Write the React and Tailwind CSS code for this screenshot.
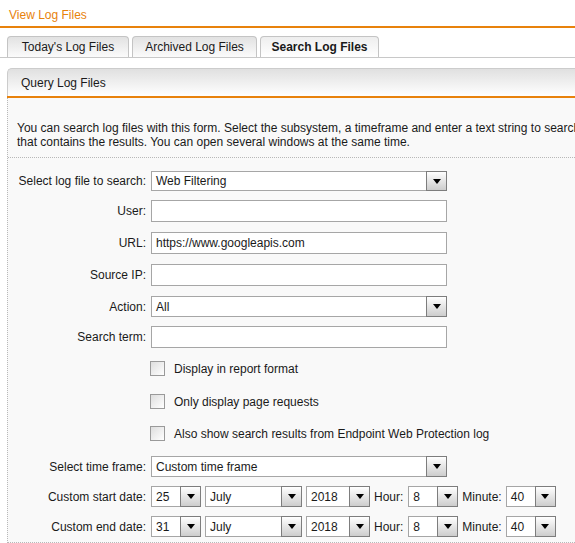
import React from 'react'

const Select = ({ value, className = '' }) => (
  <div className={`flex h-full items-stretch border border-[#a6a6a6] bg-white ${className}`}>
    <div className="flex flex-1 items-center overflow-hidden whitespace-nowrap pl-[4px]">{value}</div>
    <div className="-my-px -mr-px flex w-[21px] items-center justify-center border border-[#7d7d7d] bg-gradient-to-b from-white to-[#cdcdcd]">
      <div className="h-0 w-0 border-x-[4px] border-t-[5px] border-x-transparent border-t-black" />
    </div>
  </div>
)

const Input = ({ value = '' }) => (
  <div className="flex h-full w-[296px] items-center border border-[#a6a6a6] bg-white pl-[4px]">{value}</div>
)

const Row = ({ label, children, className = '' }) => (
  <div className={`flex items-stretch ${className}`}>
    <div className="flex w-[138px] items-center justify-end whitespace-nowrap">{label}</div>
    <div className="ml-[5px] flex items-stretch">{children}</div>
  </div>
)

const Check = ({ label, className = '' }) => (
  <div className={`flex h-[15px] items-center pl-[142px] ${className}`}>
    <div className="h-[15px] w-[15px] border border-[#9a9a9a] bg-gradient-to-br from-[#dedede] to-white" />
    <span className="ml-[9px] whitespace-nowrap">{label}</span>
  </div>
)

const Tab = ({ label, active }) => (
  <div
    className={`flex h-[21px] items-center justify-center rounded-t-[4px] border border-b-0 border-[#c4c4c4] ${
      active ? 'bg-gradient-to-b from-[#eeeeee] to-white font-bold' : 'bg-gradient-to-b from-[#e2e2e2] to-[#fbfbfb]'
    }`}
  >
    {label}
  </div>
)

const DateRow = ({ label, day, className }) => (
  <Row label={label} className={`h-[21px] ${className}`}>
    <Select value={day} className="w-[50px]" />
    <Select value="July" className="ml-[4px] w-[97px]" />
    <Select value="2018" className="ml-[4px] w-[64px]" />
    <span className="ml-[4px] flex items-center">Hour:</span>
    <Select value="8" className="ml-[5px] w-[50px]" />
    <span className="ml-[4px] flex items-center">Minute:</span>
    <Select value="40" className="ml-[4px] w-[50px]" />
  </Row>
)

export default function App() {
  return (
    <div className="h-[543px] w-[575px] overflow-hidden bg-white font-['Liberation_Sans',Arial,sans-serif] text-[12px] leading-[14px] text-[#1a1a1a]">
      <div className="h-[26px] pl-[9px] pt-[8px] text-[#e8820c]">View Log Files</div>
      <div className="h-[2px] bg-[#e8820c]" />

      <div className="mt-[8px] flex border-b border-[#c8c8c8] pl-[7px]">
        <div className="w-[122px]"><Tab label="Today's Log Files" /></div>
        <div className="ml-[3px] w-[125px]"><Tab label="Archived Log Files" /></div>
        <div className="ml-[3px] w-[119px]"><Tab label="Search Log Files" active /></div>
      </div>

      <div className="ml-[7px] mt-[10px] w-[760px]">
        <div className="flex h-[28px] items-center rounded-tl-[5px] border-l border-t border-[#cccccc] bg-gradient-to-b from-[#e0e0e0] to-white pl-[13px]">
          Query Log Files
        </div>
        <div className="h-[2px] bg-[#e8820c]" />
        <div className="border-l border-dotted border-[#b8b8b8] bg-[#f9f9f9] pb-[10px]">
          <p className="whitespace-nowrap pl-[9px] pt-[23px]">
            You can search log files with this form. Select the subsystem, a timeframe and enter a text string to search for. A new window opens
            <br />
            that contains the results. You can open several windows at the same time.
          </p>
          <div className="mt-[8px] border-t border-dotted border-[#b8b8b8]" />

          <Row label="Select log file to search:" className="mt-[13px] h-[20px]">
            <Select value="Web Filtering" className="w-[296px]" />
          </Row>
          <Row label="User:" className="mt-[9px] h-[22px]">
            <Input />
          </Row>
          <Row label="URL:" className="mt-[10px] h-[22px]">
            <Input value="https://www.googleapis.com" />
          </Row>
          <Row label="Source IP:" className="mt-[10px] h-[22px]">
            <Input />
          </Row>
          <Row label="Action:" className="mt-[10px] h-[21px]">
            <Select value="All" className="w-[296px]" />
          </Row>
          <Row label="Search term:" className="mt-[9px] h-[22px]">
            <Input />
          </Row>

          <Check label="Display in report format" className="mt-[13px]" />
          <Check label="Only display page requests" className="mt-[18px]" />
          <Check label="Also show search results from Endpoint Web Protection log" className="mt-[17px]" />

          <Row label="Select time frame:" className="mt-[15px] h-[21px]">
            <Select value="Custom time frame" className="w-[296px]" />
          </Row>
          <DateRow label="Custom start date:" day="25" className="mt-[9px]" />
          <DateRow label="Custom end date:" day="31" className="mt-[9px]" />

          <div className="mt-[5px] border-t border-dotted border-[#b8b8b8]" />
        </div>
      </div>
    </div>
  )
}
